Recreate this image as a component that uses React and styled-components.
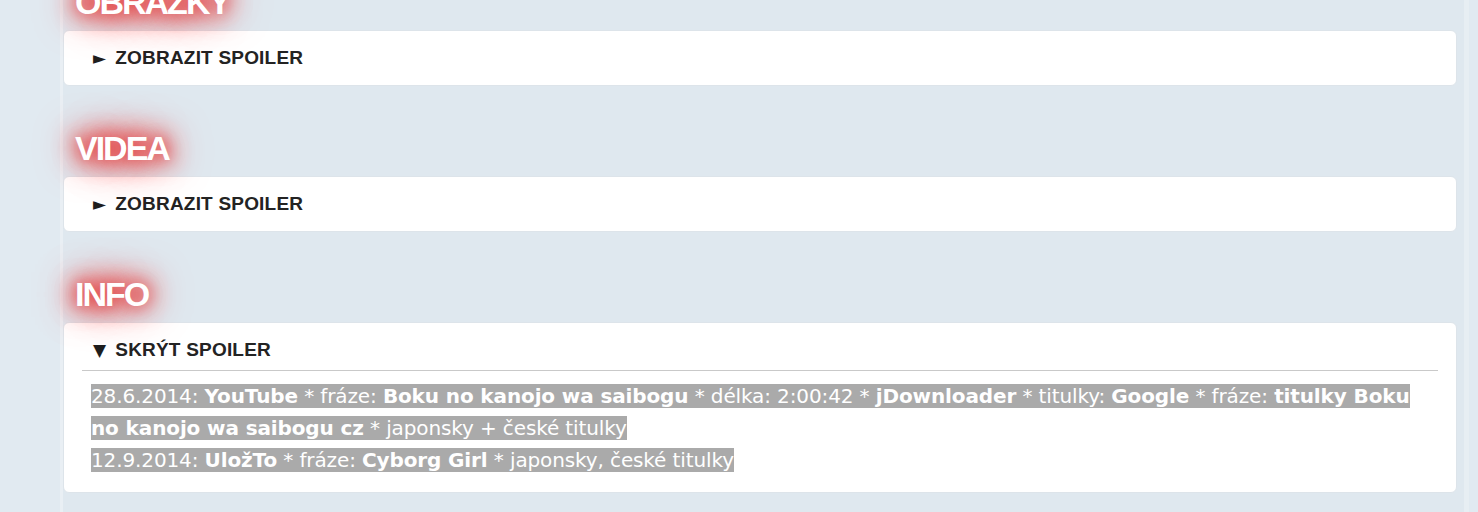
import React from 'react'
import styled, { createGlobalStyle } from 'styled-components'

const GlobalStyle = createGlobalStyle`
  html, body {
    margin: 0;
    padding: 0;
    background: #e1eaf1;
    overflow: hidden;
  }
  body {
    font-family: 'Liberation Sans', Arial, sans-serif;
  }
`

const Column = styled.main`
  margin-left: 60px;
  width: 1394px;
  min-height: 540px;
  margin-top: -18px;
  background: #dfe8ef;
  border-left: 3px solid #e9eff4;
  border-right: 5px solid #e7eef3;
  padding-right: 7px;
`

const Section = styled.section`
  margin-bottom: 42px;
`

const Heading = styled.h2`
  position: relative;
  z-index: 1;
  margin: 0 0 8px;
  padding-left: 12px;
  font-family: 'Liberation Sans', Arial, sans-serif;
  font-weight: 700;
  font-size: 34px;
  line-height: 40px;
  letter-spacing: -2px;
  color: #fff;
  text-transform: uppercase;
  text-shadow: 0 0 16px #e43b3b, 0 0 24px #e43b3b, 0 0 34px #e85050, 0 0 44px #ec7070;
`

const Spoiler = styled.div`
  background: #fff;
  border: 1px solid #dde4ea;
  border-radius: 6px;
  padding: 6px 18px ${p => (p.open ? '16px' : '6px')};
`

const Toggle = styled.div`
  height: 41px;
  display: flex;
  align-items: center;
  padding-left: 11px;
  font-family: 'Liberation Sans', Arial, sans-serif;
  font-weight: 700;
  font-size: 19px;
  letter-spacing: 0.2px;
  color: #232323;
  text-transform: uppercase;
  border-bottom: 1px solid ${p => (p.open ? '#c9c9c9' : 'transparent')};
`

const Arrow = styled.span`
  font-family: 'DejaVu Sans', sans-serif;
  font-size: 17px;
  margin-right: 9px;
  color: #1e1e1e;
`

const Content = styled.div`
  margin-top: 9px;
  padding-left: 9px;
  font-family: 'DejaVu Sans', Tahoma, sans-serif;
  font-size: 20px;
  letter-spacing: -0.12px;
  line-height: 32px;
  color: #fff;
`

const Marked = styled.span`
  background: #aaaaaa;
  b {
    font-weight: 700;
  }
`

const SpoilerBox = ({ open, children }) => (
  <Spoiler open={open}>
    <Toggle open={open}>
      <Arrow>{open ? '▼' : '►'}</Arrow>
      {open ? 'Skrýt spoiler' : 'Zobrazit spoiler'}
    </Toggle>
    {open && <Content>{children}</Content>}
  </Spoiler>
)

const App = () => (
  <>
    <GlobalStyle />
    <Column>
      <Section>
        <Heading>Obrázky</Heading>
        <SpoilerBox />
      </Section>
      <Section>
        <Heading>Videa</Heading>
        <SpoilerBox />
      </Section>
      <Section>
        <Heading>Info</Heading>
        <SpoilerBox open>
          <Marked>
            28.6.2014: <b>YouTube</b> * fráze: <b>Boku no kanojo wa saibogu</b> * délka: 2:00:42 * <b>jDownloader</b> * titulky: <b>Google</b> * fráze: <b>titulky Boku no kanojo wa saibogu cz</b> * japonsky + české titulky
            <br />
            12.9.2014: <b>UložTo</b> * fráze: <b>Cyborg Girl</b> * japonsky, české titulky
          </Marked>
        </SpoilerBox>
      </Section>
    </Column>
  </>
)

export default App
